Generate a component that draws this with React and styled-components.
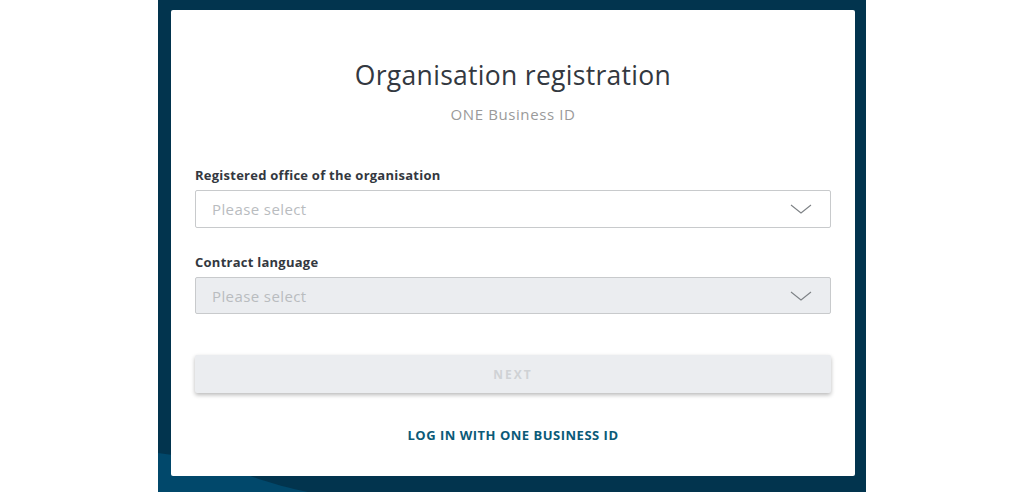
import React from "react";
import styled, { createGlobalStyle } from "styled-components";

const Global = createGlobalStyle`
  html, body { margin: 0; padding: 0; background: #ffffff; }
  body { font-family: "Open Sans", "Noto Sans", sans-serif; -webkit-font-smoothing: antialiased; }
  * { box-sizing: border-box; }
`;

const Page = styled.div`
  display: flex;
  justify-content: center;
  height: 492px;
  overflow: hidden;
`;

const Panel = styled.div`
  position: relative;
  width: 708px;
  height: 492px;
  background: #02344e;
  padding: 10px 11px 16px 13px;
  display: flex;
`;

const Wave = styled.svg`
  position: absolute;
  left: 0;
  bottom: 0;
  width: 200px;
  height: 60px;
`;

const Card = styled.main`
  position: relative;
  flex: 1;
  background: #ffffff;
  border-radius: 2px;
  padding: 50px 24px 0 24px;
  display: flex;
  flex-direction: column;
`;

const Title = styled.h1`
  margin: 0;
  text-align: center;
  font-size: 26.5px;
  font-weight: 400;
  color: #333840;
  letter-spacing: 0.3px;
  line-height: 30px;
`;

const Subtitle = styled.div`
  margin-top: 14px;
  text-align: center;
  font-size: 15px;
  color: #9a9a9a;
  letter-spacing: 0.6px;
  line-height: 20px;
`;

const Field = styled.div`
  display: flex;
  flex-direction: column;
  margin-top: ${(p) => p.$mt}px;
`;

const Label = styled.label`
  font-size: 13px;
  font-weight: 700;
  color: #333840;
  letter-spacing: 0.25px;
  line-height: 18px;
  margin-bottom: 6px;
`;

const Select = styled.div`
  height: ${(p) => p.$h}px;
  border: 1px solid #c8cacc;
  border-radius: 2px;
  background: ${(p) => (p.$disabled ? "#ebedf0" : "#ffffff")};
  display: flex;
  align-items: center;
  justify-content: space-between;
  padding: 0 18px 0 16px;
`;

const Placeholder = styled.span`
  font-size: 15px;
  color: #b9bcbf;
  letter-spacing: 0.4px;
`;

const Button = styled.button`
  margin-top: 41px;
  height: 38px;
  border: none;
  border-radius: 2px;
  background: #ebedf0;
  box-shadow: 0 2px 4px rgba(0, 0, 0, 0.28);
  font-family: inherit;
  font-size: 12px;
  font-weight: 700;
  letter-spacing: 2px;
  color: #cfd2d5;
`;

const Link = styled.a`
  margin-top: 33px;
  align-self: center;
  font-size: 13px;
  font-weight: 700;
  letter-spacing: 0.5px;
  color: #0b5a78;
  text-decoration: none;
`;

const Chevron = () => (
  <svg width="22" height="10" viewBox="0 0 22 10" fill="none">
    <path d="M1 1 L11 9 L21 1" stroke="#7d8185" strokeWidth="1.1" />
  </svg>
);

export default function App() {
  return (
    <>
      <Global />
      <Page>
        <Panel>
          <Wave viewBox="0 0 200 60">
            <path d="M0 21 C 40 26, 70 34, 95 45 C 115 52, 130 56, 150 60 L0 60 Z" fill="#01486b" />
          </Wave>
          <Card>
            <Title>Organisation registration</Title>
            <Subtitle>ONE Business ID</Subtitle>
            <Field $mt={42}>
              <Label>Registered office of the organisation</Label>
              <Select $h={38}>
                <Placeholder>Please select</Placeholder>
                <Chevron />
              </Select>
            </Field>
            <Field $mt={25}>
              <Label>Contract language</Label>
              <Select $h={37} $disabled>
                <Placeholder>Please select</Placeholder>
                <Chevron />
              </Select>
            </Field>
            <Button disabled>NEXT</Button>
            <Link href="#">LOG IN WITH ONE BUSINESS ID</Link>
          </Card>
        </Panel>
      </Page>
    </>
  );
}
